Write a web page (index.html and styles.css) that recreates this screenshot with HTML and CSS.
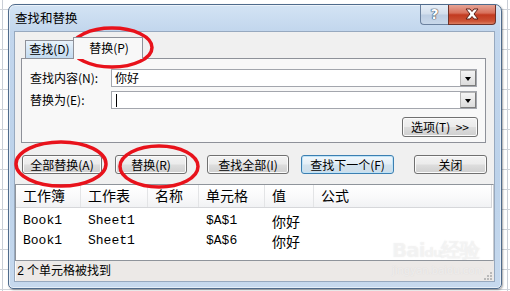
FILE: index.html
```html
<!DOCTYPE html>
<html lang="zh">
<head>
<meta charset="utf-8">
<title>查找和替换</title>
<link rel="stylesheet" href="styles.css">
</head>
<body>
<div class="window">
  <div class="titlebar">
    <span class="title">查找和替换</span>
    <div class="caption">
      <div class="cap-help">?</div>
      <div class="cap-close">
        <svg width="18" height="12" viewBox="0 0 18 12"><path d="M3 1 H7 L9 3.5 L11 1 H15 L11 6 L15 11 H11 L9 8.5 L7 11 H3 L7 6 Z" fill="#fff" stroke="#5a2018" stroke-width="1"/></svg>
      </div>
    </div>
  </div>
  <div class="client">
    <div class="tabs">
      <div class="tab">查找(D)</div>
      <div class="tab active">替换(P)</div>
    </div>
    <div class="panel">
      <div class="field">
        <span class="lbl">查找内容(N):</span>
        <div class="combo"><span class="val">你好</span><span class="drop"></span></div>
      </div>
      <div class="field">
        <span class="lbl">替换为(E):</span>
        <div class="combo"><span class="caret"></span><span class="drop"></span></div>
      </div>
      <div class="optrow"><div class="btn opt">选项(T)&nbsp;&nbsp;&gt;&gt;</div></div>
    </div>
    <div class="actions">
      <div class="btn b1">全部替换(A)</div>
      <div class="btn b2">替换(R)</div>
      <div class="btn b3">查找全部(I)</div>
      <div class="btn b4 focus">查找下一个(F)</div>
      <div class="btn b5">关闭</div>
    </div>
    <div class="results">
      <div class="list">
        <div class="grid head">
          <span>工作簿</span><span>工作表</span><span>名称</span><span>单元格</span><span>值</span><span class="last">公式</span>
        </div>
        <div class="grid row first">
          <span class="m">Book1</span><span class="m">Sheet1</span><span></span><span class="m">$A$1</span><span>你好</span><span></span>
        </div>
        <div class="grid row">
          <span class="m">Book1</span><span class="m">Sheet1</span><span></span><span class="m">$A$6</span><span>你好</span><span></span>
        </div>
      </div>
      <div class="status">
        <span class="stext"><span class="m">2</span> 个单元格被找到</span>
        <svg class="grip" width="8" height="8" viewBox="0 0 8 8"><g fill="#b9b9b9"><rect x="6" y="0" width="2" height="2"/><rect x="3" y="3" width="2" height="2"/><rect x="6" y="3" width="2" height="2"/><rect x="0" y="6" width="2" height="2"/><rect x="3" y="6" width="2" height="2"/><rect x="6" y="6" width="2" height="2"/></g></svg>
      </div>
    </div>
  </div>
</div>
<div class="wm">
  <div class="wm1">Bai<span class="paw">du</span>经验</div>
  <div class="wm2">jingyan.baidu.com</div>
</div>
<svg class="marks" width="510" height="291" viewBox="0 0 510 291">
  <g fill="none" stroke="#e8121b" stroke-width="3.5">
    <ellipse cx="112" cy="47.5" rx="40" ry="19.5"/>
    <ellipse cx="61" cy="164" rx="45" ry="22"/>
    <ellipse cx="159" cy="166.5" rx="39" ry="20.5"/>
  </g>
</svg>
</body>
</html>
```

FILE: styles.css
```css
* { box-sizing: border-box; }

body {
  margin: 0;
  width: 510px;
  height: 291px;
  overflow: hidden;
  position: relative;
  padding: 4px 0 0 8px;
  font-family: "Noto Sans CJK SC", sans-serif;
  font-size: 12px;
  color: #000;
  background-color: #fff;
  background-image:
    linear-gradient(180deg, #d0d4da 1px, transparent 1px),
    linear-gradient(90deg, #c9ced6 1px, transparent 1px);
  background-size: 100% 20px, 505px 100%;
  background-position: 0 9px, 2px 0;
}

.window {
  width: 494px;
  height: 285px;
  border: 1px solid #4f6b8c;
  border-radius: 7px 7px 5px 5px;
  background: linear-gradient(180deg, #d3e3f4 0, #c2d6ed 26px, #bcd2ea 60%, #c6d9ee 100%);
  box-shadow: 1px 1px 2px rgba(0,0,0,.35), inset 0 0 0 1px rgba(255,255,255,.55);
  padding: 0 6px 6px 5px;
  display: flex;
  flex-direction: column;
}

.titlebar {
  height: 26px;
  display: flex;
  align-items: flex-start;
}
.title {
  margin: 5px 0 0 1px;
  font-size: 12.5px;
  line-height: 16px;
  color: #000;
}
.caption {
  margin-left: auto;
  margin-right: -1px;
  display: flex;
}
.cap-help {
  width: 28px;
  height: 20px;
  border: 1px solid #6b819e;
  border-top: none;
  border-right: none;
  border-radius: 0 0 0 4px;
  background: linear-gradient(180deg, #e6eef7 0, #d2deec 48%, #bccde2 52%, #c9d8ea 100%);
  text-align: center;
  font-family: "DejaVu Sans", sans-serif;
  font-weight: bold;
  font-size: 14px;
  line-height: 18px;
  color: #fff;
  text-shadow: 0 0 1px #2c3e55, 0 0 1px #2c3e55, 0 0 1px #2c3e55;
}
.cap-close {
  width: 48px;
  height: 20px;
  border: 1px solid #6e3229;
  border-top: none;
  border-radius: 0 0 4px 0;
  background: linear-gradient(180deg, #e6a496 0, #d8705b 42%, #c23a20 52%, #cc5235 85%, #dc7d60 100%);
  display: flex;
  align-items: center;
  justify-content: center;
  padding-bottom: 1px;
}

.client {
  flex: 1;
  border: 1px solid #97a9bf;
  background: #f0f0f0;
  display: flex;
  flex-direction: column;
}

.tabs {
  display: flex;
  align-items: flex-end;
  margin: 5px 0 0 10px;
  height: 22px;
  position: relative;
  z-index: 1;
}
.tab {
  height: 18px;
  width: 48px;
  margin-bottom: 1px;
  border: 1px solid #8e9199;
  border-bottom: none;
  border-right: none;
  background: linear-gradient(180deg, #e9f3fb 0, #d3e5f5 50%, #c3dbf1 100%);
  text-align: center;
  line-height: 16px;
  font-size: 12px;
}
.tab.active {
  width: 70px;
  height: 22px;
  margin-bottom: 0;
  border-right: 1px solid #8e9199;
  background: #f8f8f8;
  line-height: 20px;
  padding-left: 2px;
}

.panel {
  margin: -1px 8px 0 6px;
  height: 85px;
  border: 1px solid #8e9199;
  background: #f8f8f8;
  padding: 10px 8px 5px 8px;
  display: flex;
  flex-direction: column;
}
.field {
  display: flex;
  height: 18px;
  margin-bottom: 4px;
}
.lbl {
  width: 81px;
  line-height: 18px;
  font-size: 12px;
}
.combo {
  flex: 1;
  border: 1px solid #a3a6ad;
  background: #fff;
  display: flex;
  align-items: center;
  padding: 0 0 0 3px;
}
.val {
  line-height: 16px;
  font-size: 12px;
}
.caret {
  width: 1px;
  height: 13px;
  background: #000;
  margin-left: 1px;
}
.drop {
  margin-left: auto;
  width: 16px;
  height: 16px;
  border: 1px solid #7c7c7c;
  border-top-color: #b5b5b5;
  border-left-color: #b5b5b5;
  background: linear-gradient(180deg, #f4f4f4, #dcdcdc);
  position: relative;
}
.drop::after {
  content: "";
  position: absolute;
  left: 4px;
  top: 6px;
  border-left: 3.5px solid transparent;
  border-right: 3.5px solid transparent;
  border-top: 4px solid #000;
}
.optrow {
  display: flex;
  justify-content: flex-end;
  margin-top: 4px;
  margin-right: -1px;
}

.btn {
  height: 19px;
  border: 1px solid #707070;
  border-radius: 3px;
  background: linear-gradient(180deg, #f3f3f3 0, #ebebeb 48%, #dddddd 52%, #cfcfcf 100%);
  box-shadow: inset 0 0 0 1px #fbfbfb;
  text-align: center;
  font-size: 12px;
  line-height: 17px;
  white-space: nowrap;
}
.btn.opt {
  width: 76px;
  height: 20px;
  line-height: 18px;
}
.btn.focus {
  border-color: #3c7fb1;
  background: linear-gradient(180deg, #f2f8fc 0, #e3eef6 48%, #d3e3ee 52%, #cddde9 100%);
  box-shadow: inset 0 0 0 1px #bfe3f7;
}

.actions {
  display: flex;
  margin: 12px 0 0 7px;
}
.b1 { width: 80px; }
.b2 { width: 72px; margin-left: 13px; }
.b3 { width: 82px; margin-left: 20px; }
.b4 { width: 93px; margin-left: 12px; }
.b5 { width: 73px; margin-left: 20px; }

.results {
  margin-top: 10px;
  flex: 1;
  display: flex;
  flex-direction: column;
}
.list {
  height: 77px;
  border: 1px solid #8f949b;
  border-right-color: #c9ccd1;
  background: #fff;
}
.grid {
  display: grid;
  grid-template-columns: 65px 67px 51px 66px 49px 1fr;
}
.grid > span {
  padding-left: 7px;
  white-space: nowrap;
}
.head {
  height: 23px;
  background: linear-gradient(180deg, #ffffff 0, #fafafb 50%, #f1f2f4 100%);
  border-bottom: 1px solid #d6d7da;
  font-size: 14px;
  line-height: 21px;
  margin-right: 1px;
}
.head > span {
  border-right: 1px solid #e3e4e6;
}
.head > span.last {
  border-right: 1px solid #d6d7da;
}
.row {
  height: 20px;
  font-size: 14px;
  line-height: 20px;
}
.row.first { margin-top: 3px; }
.m {
  font-family: "Liberation Mono", monospace;
  font-size: 13px;
}

.status {
  height: 20px;
  background: #ece9e7;
  border-left: 1px solid #fbfbfb;
  display: flex;
  align-items: center;
  padding-left: 1px;
  font-size: 12px;
  line-height: 20px;
}
.stext .m { font-size: 12px; }
.grip {
  margin-left: auto;
  margin-right: 2px;
  margin-top: 9px;
}

.wm {
  position: absolute;
  left: 392px;
  top: 238px;
  color: rgba(255,255,255,.5);
  text-shadow: 0 0 1px rgba(170,170,170,.3);
  font-family: "DejaVu Sans", sans-serif;
  pointer-events: none;
}
.wm1 {
  font-size: 20px;
  font-weight: bold;
  line-height: 24px;
  letter-spacing: -1px;
}
.wm1 .paw {
  font-size: 13px;
}
.wm2 {
  font-size: 10px;
  line-height: 12px;
}

.marks {
  position: absolute;
  left: 0;
  top: 0;
  pointer-events: none;
}
```
